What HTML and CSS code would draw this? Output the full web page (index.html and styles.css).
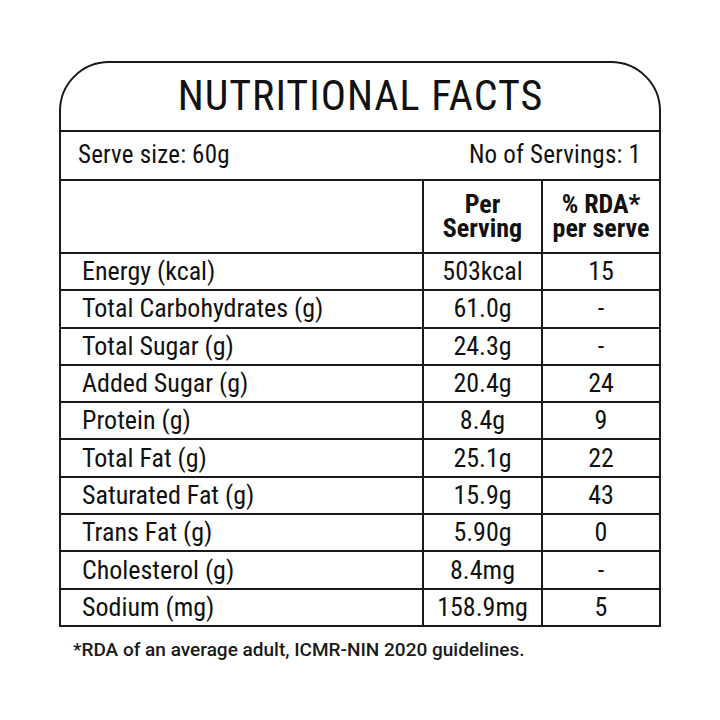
FILE: index.html
```html
<!DOCTYPE html>
<html lang="en">
<head>
<meta charset="utf-8">
<title>Nutritional Facts</title>
<link rel="stylesheet" href="styles.css">
</head>
<body>
<main class="page">
  <section class="card">
    <h1 class="title">NUTRITIONAL FACTS</h1>
    <div class="serve">
      <span>Serve size: 60g</span>
      <span>No of Servings: 1</span>
    </div>
    <div class="row head">
      <div class="cell label"></div>
      <div class="cell val"><span class="hl">Per</span><span class="hl">Serving</span></div>
      <div class="cell val"><span class="hl">% RDA*</span><span class="hl">per serve</span></div>
    </div>
    <div class="row"><div class="cell label">Energy (kcal)</div><div class="cell val">503kcal</div><div class="cell val">15</div></div>
    <div class="row"><div class="cell label">Total Carbohydrates (g)</div><div class="cell val">61.0g</div><div class="cell val">-</div></div>
    <div class="row"><div class="cell label">Total Sugar (g)</div><div class="cell val">24.3g</div><div class="cell val">-</div></div>
    <div class="row"><div class="cell label">Added Sugar (g)</div><div class="cell val">20.4g</div><div class="cell val">24</div></div>
    <div class="row"><div class="cell label">Protein (g)</div><div class="cell val">8.4g</div><div class="cell val">9</div></div>
    <div class="row"><div class="cell label">Total Fat (g)</div><div class="cell val">25.1g</div><div class="cell val">22</div></div>
    <div class="row"><div class="cell label">Saturated Fat (g)</div><div class="cell val">15.9g</div><div class="cell val">43</div></div>
    <div class="row"><div class="cell label">Trans Fat (g)</div><div class="cell val">5.90g</div><div class="cell val">0</div></div>
    <div class="row"><div class="cell label">Cholesterol (g)</div><div class="cell val">8.4mg</div><div class="cell val">-</div></div>
    <div class="row"><div class="cell label">Sodium (mg)</div><div class="cell val">158.9mg</div><div class="cell val">5</div></div>
  </section>
  <p class="note">*RDA of an average adult, ICMR-NIN 2020 guidelines.</p>
</main>
</body>
</html>
```
FILE: styles.css
```css
html, body {
  margin: 0;
  padding: 0;
  background: #ffffff;
}

body {
  font-family: Roboto, "Open Sans", sans-serif;
  font-stretch: 75%;
  color: #111111;
}

.page {
  width: 720px;
  height: 720px;
  padding: 61px 0 0 59px;
  box-sizing: border-box;
}

.card {
  width: 602px;
  box-sizing: border-box;
  border: 2px solid #1a1a1a;
  border-radius: 50px 50px 0 0;
}

.title {
  margin: 0;
  height: 69px;
  display: flex;
  align-items: center;
  justify-content: center;
  font-size: 42px;
  font-weight: 400;
  letter-spacing: 1px;
  border-bottom: 2px solid #1a1a1a;
  padding: 0 0 2px 1px;
  box-sizing: border-box;
}

.serve {
  height: 47px;
  display: flex;
  align-items: center;
  justify-content: space-between;
  padding: 0 18px 3px 17px;
  font-size: 25px;
  font-weight: 400;
  letter-spacing: 0.2px;
  box-sizing: border-box;
}

.row {
  display: grid;
  grid-template-columns: 1fr 119px 118px;
  height: 37.3px;
  border-top: 2px solid #1a1a1a;
  box-sizing: border-box;
}

.row.head {
  height: 73px;
}

.cell {
  display: flex;
  align-items: center;
  font-size: 26px;
  font-weight: 400;
  padding-bottom: 1px;
  line-height: 1;
  box-sizing: border-box;
}

.label {
  padding-left: 21px;
}

.val {
  justify-content: center;
  text-align: center;
  border-left: 2px solid #1a1a1a;
}

.head .val {
  flex-direction: column;
  font-weight: 700;
  font-size: 26px;
  padding-bottom: 2px;
}

.hl {
  display: block;
  line-height: 24px;
  height: 24px;
}

.note {
  margin: 11px 0 0 14px;
  font-size: 19px;
  font-weight: 500;
  font-stretch: 100%;
  color: #1a1a1a;
}
```
